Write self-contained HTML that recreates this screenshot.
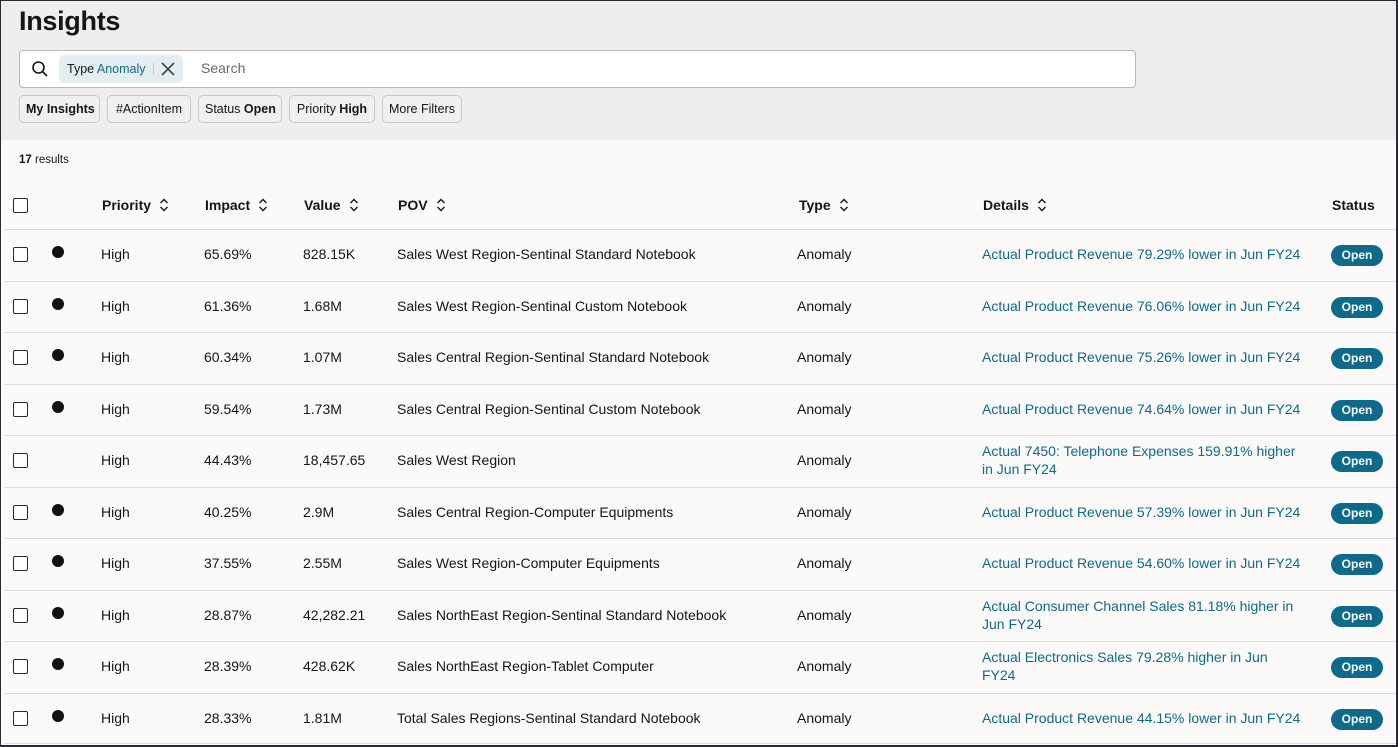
<!DOCTYPE html>
<html style="width:1398px;height:747px;overflow:hidden"><head><meta charset="utf-8"><style>
*{box-sizing:border-box;margin:0;padding:0}
body{width:1398px;height:747px;overflow:hidden;font-family:"Liberation Sans",sans-serif;color:#161513;background:#fbfaf9;position:relative}
.frame{position:absolute;left:0;top:0;width:1398px;height:747px;border:1px solid #2a2a33;border-right-width:2px;border-bottom-width:2px;pointer-events:none;z-index:5}
.hdr{position:absolute;left:0;top:0;width:1398px;height:140px;background:#efeeec}
h1{position:absolute;left:19px;top:6px;font-size:27px;font-weight:bold;letter-spacing:-0.3px}
.search{position:absolute;left:19px;top:50px;width:1117px;height:38px;background:#fff;border:1px solid #b9b7b3;border-radius:4px}
.chip{position:absolute;left:39px;top:4px;height:28px;width:124px;background:#e4eef1;border-radius:5px;font-size:12.5px;line-height:28px;padding-left:8px;white-space:nowrap}
.chip b{font-weight:normal;color:#0e6a8a}
.ph{position:absolute;left:181px;top:9px;font-size:14px;color:#6b6864}
.f{position:absolute;top:95px;height:28px;border:1px solid #c9c7c3;border-radius:5px;background:#f1f0ee;font-size:12.5px;line-height:26px;padding:0 6px;white-space:nowrap;text-align:center}
.res{position:absolute;left:19px;top:154px;font-size:11.5px}
.th{position:absolute;top:197px;font-size:14px;font-weight:bold;white-space:nowrap}
.th svg{vertical-align:-2px;margin-left:8px}
.cb{position:absolute;left:13px;width:15px;height:15px;border:1.5px solid #2a2a2a;border-radius:2px;background:#fff}
.row{position:absolute;left:5px;width:1393px;height:52px;border-top:1px solid #dcdad6}
.c{position:absolute;font-size:14px;white-space:nowrap}
.dot{position:absolute;left:52px;width:12px;height:12px;border-radius:50%;background:#111}
.lnk{color:#0e6a8a}
.pill{position:absolute;left:1331px;width:52px;height:21px;border-radius:11px;background:#0e6a8a;color:#fff;font-size:12px;font-weight:bold;text-align:center;line-height:21px}
</style></head><body>
<div class="hdr">
<h1>Insights</h1>
<div class="search">
<svg style="position:absolute;left:11px;top:9px" width="18" height="18" viewBox="0 0 18 18"><circle cx="7.5" cy="7.5" r="5.5" fill="none" stroke="#161513" stroke-width="1.6"/><line x1="11.5" y1="11.5" x2="16" y2="16" stroke="#161513" stroke-width="1.6"/></svg>
<div class="chip">Type <b>Anomaly</b><span style="position:absolute;left:94px;top:8px;width:1px;height:12px;background:#c5c5c5"></span>
<svg style="position:absolute;left:102px;top:7px" width="14" height="14" viewBox="0 0 14 14"><path d="M1 1L13 13M13 1L1 13" stroke="#444" stroke-width="1.6"/></svg></div>
<div class="ph">Search</div>
</div>
<div class="f" style="left:19px;width:81px;font-weight:bold">My Insights</div>
<div class="f" style="left:107px;width:84px">#ActionItem</div>
<div class="f" style="left:198px;width:84px">Status <b>Open</b></div>
<div class="f" style="left:289px;width:86px">Priority <b>High</b></div>
<div class="f" style="left:382px;width:80px">More Filters</div>
</div>
<div class="res"><b>17</b> results</div>
<div class="cb" style="top:198px"></div>
<div id="ths"></div>
<div id="rows"></div>
<script>
var s='<svg width="10" height="14" viewBox="0 0 10 14"><path d="M1.5 5L5 1.5L8.5 5M1.5 9L5 12.5L8.5 9" fill="none" stroke="#161513" stroke-width="1.4"/></svg>';
var th=[[102,"Priority",1],[205,"Impact",1],[304,"Value",1],[398,"POV",1],[799,"Type",1],[983,"Details",1],[1332,"Status",0]];
var g="";th.forEach(function(a){g+='<div class="th" style="left:'+a[0]+'px">'+a[1]+(a[2]?s:'')+'</div>';});
document.getElementById("ths").innerHTML=g;
var d=[
[1,"65.69%","828.15K","Sales West Region-Sentinal Standard Notebook","Actual Product Revenue 79.29% lower in Jun FY24"],
[1,"61.36%","1.68M","Sales West Region-Sentinal Custom Notebook","Actual Product Revenue 76.06% lower in Jun FY24"],
[1,"60.34%","1.07M","Sales Central Region-Sentinal Standard Notebook","Actual Product Revenue 75.26% lower in Jun FY24"],
[1,"59.54%","1.73M","Sales Central Region-Sentinal Custom Notebook","Actual Product Revenue 74.64% lower in Jun FY24"],
[0,"44.43%","18,457.65","Sales West Region","Actual 7450: Telephone Expenses 159.91% higher<br>in Jun FY24"],
[1,"40.25%","2.9M","Sales Central Region-Computer Equipments","Actual Product Revenue 57.39% lower in Jun FY24"],
[1,"37.55%","2.55M","Sales West Region-Computer Equipments","Actual Product Revenue 54.60% lower in Jun FY24"],
[1,"28.87%","42,282.21","Sales NorthEast Region-Sentinal Standard Notebook","Actual Consumer Channel Sales 81.18% higher in<br>Jun FY24"],
[1,"28.39%","428.62K","Sales NorthEast Region-Tablet Computer","Actual Electronics Sales 79.28% higher in Jun<br>FY24"],
[1,"28.33%","1.81M","Total Sales Regions-Sentinal Standard Notebook","Actual Product Revenue 44.15% lower in Jun FY24"]];
var h="";
for(var i=0;i<d.length;i++){var t=229+i*51.5,m=t+26,r=d[i];
h+='<div class="row" style="top:'+t+'px"></div>';
h+='<div class="cb" style="top:'+(m-8)+'px"></div>';
if(r[0])h+='<div class="dot" style="top:'+(m-9)+'px"></div>';
h+='<div class="c" style="left:101px;top:'+(m-9)+'px">High</div>';
h+='<div class="c" style="left:204px;top:'+(m-9)+'px">'+r[1]+'</div>';
h+='<div class="c" style="left:303px;top:'+(m-9)+'px">'+r[2]+'</div>';
h+='<div class="c" style="left:397px;top:'+(m-9)+'px">'+r[3]+'</div>';
h+='<div class="c" style="left:797px;top:'+(m-9)+'px">Anomaly</div>';
var two=r[4].indexOf('<br>')>=0;
h+='<div class="c lnk" style="left:982px;line-height:18px;top:'+(two?m-19:m-10)+'px">'+r[4]+'</div>';
h+='<div class="pill" style="top:'+(m-10)+'px">Open</div>';}
h+='<div class="row" style="top:743px;height:2px"></div>';
document.getElementById("rows").innerHTML=h;
</script>
<div class="frame"></div>
</body></html>
